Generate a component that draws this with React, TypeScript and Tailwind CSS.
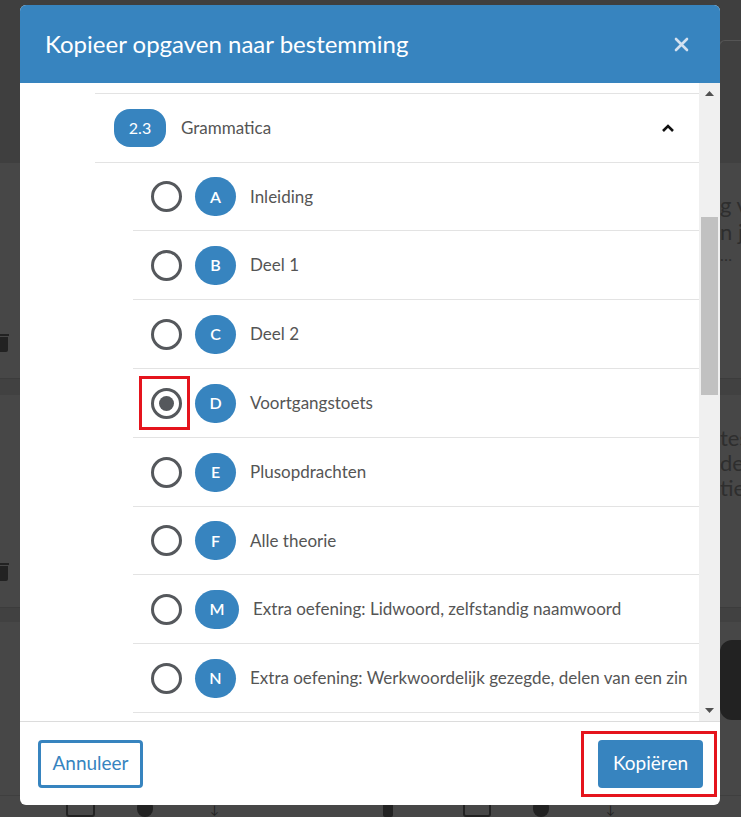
import React from "react";

const items: { l: string; t: string; h: string; sel?: boolean; w?: string }[] = [
  { l: "A", t: "Inleiding", h: "h-[68px]" },
  { l: "B", t: "Deel 1", h: "h-[69px]" },
  { l: "C", t: "Deel 2", h: "h-[69px]" },
  { l: "D", t: "Voortgangstoets", h: "h-[69px]", sel: true },
  { l: "E", t: "Plusopdrachten", h: "h-[69px]" },
  { l: "F", t: "Alle theorie", h: "h-[68px]" },
  { l: "M", t: "Extra oefening: Lidwoord, zelfstandig naamwoord", h: "h-[69px]" },
  { l: "N", t: "Extra oefening: Werkwoordelijk gezegde, delen van een zin", h: "h-[69px]" },
  { l: "O", t: "Extra oefening: Zinsdelen", h: "h-[69px]" },
];

function Background() {
  return (
    <div className="flex flex-col w-full h-full">
      <div className="h-[163px] bg-[#3f3f3f] flex justify-end pt-[40px]">
        <div className="w-[22px] h-[123px] rounded-tl-[6px] border-l border-t border-[#555] bg-[#404040]" />
      </div>
      <div className="h-[215px] bg-[#474747] flex justify-between">
        <div className="flex flex-col justify-end pb-[26px]">
          <div className="w-[9px] h-[2px] bg-[#222]" />
          <div className="w-[8px] h-[15px] mt-[1px] bg-[#222] rounded-br-[2px]" />
        </div>
        <div className="w-[21px] overflow-hidden pt-[28px] text-[#2e2e2e] text-[22px] leading-[27px] whitespace-nowrap" style={{ fontFamily: "Lato, sans-serif" }}>
          <div>g va</div>
          <div>n jij</div>
          <div className="text-[16px] leading-[20px]">…</div>
        </div>
      </div>
      <div className="h-[17px] bg-[#414141] border-t border-[#3c3c3c]" />
      <div className="h-[212px] bg-[#474747] flex justify-between">
        <div className="flex flex-col justify-end pb-[26px]">
          <div className="w-[9px] h-[2px] bg-[#222]" />
          <div className="w-[8px] h-[15px] mt-[1px] bg-[#222] rounded-br-[2px]" />
        </div>
        <div className="w-[21px] overflow-hidden pt-[30px] text-[#2e2e2e] text-[22px] leading-[25px] whitespace-nowrap" style={{ fontFamily: "Lato, sans-serif" }}>
          <div>tes</div>
          <div>den</div>
          <div>tie.</div>
        </div>
      </div>
      <div className="h-[15px] bg-[#414141] border-t border-[#3c3c3c]" />
      <div className="flex-1 bg-[#474747] flex justify-end pt-[18px]">
        <div className="w-[21px] h-[80px] bg-[#222] rounded-tl-[12px] rounded-bl-[12px]" />
      </div>
      <div className="h-[22px] bg-[#474747] border-t border-[#3f3f3f] flex items-end pl-[66px] gap-0">
        <div className="w-[29px] h-[18px] border-2 border-[#222] rounded-[3px]" />
        <div className="w-[16px] h-[18px] ml-[42px] bg-[#222] rounded-full" />
        <div className="w-[12px] h-[14px] ml-[57px] text-[#222] text-[12px] leading-[14px]">↓</div>
        <div className="w-[10px] h-[18px] ml-[161px] bg-[#222] rounded-[2px]" />
        <div className="w-[28px] h-[18px] ml-[70px] border-2 border-[#222] rounded-[3px]" />
        <div className="w-[16px] h-[18px] ml-[42px] bg-[#222] rounded-full" />
        <div className="w-[12px] h-[14px] ml-[57px] text-[#222] text-[12px] leading-[14px]">↓</div>
      </div>
    </div>
  );
}

function Radio({ sel }: { sel?: boolean }) {
  return (
    <div className="relative w-[31px] h-[31px] shrink-0">
      <div className="w-[31px] h-[31px] rounded-full border-[3px] border-[#55585c] flex items-center justify-center bg-white">
        {sel && <div className="w-[15px] h-[15px] rounded-full bg-[#55585c]" />}
      </div>
      {sel && (
        <div className="absolute left-[-12px] top-[-12px] w-[51px] h-[54px] border-[3px] border-[#e5141d]" />
      )}
    </div>
  );
}

export default function App() {
  const font = { fontFamily: "Lato, 'Open Sans', sans-serif" };
  return (
    <div className="relative w-[741px] h-[817px] overflow-hidden bg-[#474747]" style={font}>
      <Background />
      <div className="absolute left-[20px] top-[5px] w-[700px] h-[800px] bg-white rounded-[6px] overflow-hidden flex flex-col">
        {/* header */}
        <div className="h-[78px] shrink-0 bg-[#3784bf] flex items-center justify-between pl-[25px] pr-[31px]">
          <div className="text-white text-[24px] leading-none pb-[1px]">Kopieer opgaven naar bestemming</div>
          <svg width="15" height="15" viewBox="0 0 15 15" className="mt-[1px]">
            <path d="M2 2 L13 13 M13 2 L2 13" stroke="#d3e1f0" strokeWidth="2.6" strokeLinecap="round" />
          </svg>
        </div>
        {/* body */}
        <div className="h-[638px] shrink-0 flex">
          <div className="flex-1 overflow-hidden pt-[10px] pl-[75px]">
            <div className="border-t border-b border-[#e3e3e3] h-[70px] flex items-center pl-[19px] pr-[24px]">
              <div className="w-[52px] h-[38px] rounded-[16px] bg-[#3784bf] text-white text-[16px] flex items-center justify-center">2.3</div>
              <div className="ml-[15px] text-[#555] text-[17px] flex-1">Grammatica</div>
              <svg width="14" height="10" viewBox="0 0 14 10">
                <path d="M2 8 L7 3 L12 8" stroke="#111" strokeWidth="2.6" fill="none" strokeLinejoin="miter" />
              </svg>
            </div>
            <div className="pl-[38px]">
              {items.map((it) => (
                <div key={it.l} className={`${it.h} border-b border-[#e3e3e3] flex items-center pl-[18px]`}>
                  <Radio sel={it.sel} />
                  <div className={`ml-[13px] ${it.l === "M" ? "min-w-[44px]" : "min-w-[41px]"} h-[39px] px-[10px] rounded-full bg-[#3784bf] text-white text-[16px] font-semibold flex items-center justify-center`}>
                    {it.l}
                  </div>
                  <div className="ml-[14px] text-[#555] text-[17px] whitespace-nowrap">{it.t}</div>
                </div>
              ))}
            </div>
          </div>
          {/* scrollbar */}
          <div className="w-[21px] shrink-0 bg-[#f0f0f0] flex flex-col items-center pt-[8px] pb-[8px] pr-[1px]">
            <svg width="9" height="5" viewBox="0 0 9 5"><path d="M0 5 L4.5 0 L9 5 Z" fill="#505050" /></svg>
            <div className="w-[17px] h-[178px] bg-[#c1c1c1] mt-[121px]" />
            <div className="flex-1" />
            <svg width="9" height="5" viewBox="0 0 9 5"><path d="M0 0 L4.5 5 L9 0 Z" fill="#505050" /></svg>
          </div>
        </div>
        {/* footer */}
        <div className="flex-1 border-t border-[#dcdcdc] flex items-center justify-between pl-[18px] pr-[17px]">
          <button className="w-[105px] h-[48px] border-[3px] border-[#3784bf] rounded-[4px] text-[#3784bf] text-[19px] bg-white">
            Annuleer
          </button>
          <div className="relative">
            <button className="w-[105px] h-[48px] rounded-[4px] bg-[#3784bf] text-white text-[19px]">Kopiëren</button>
            <div className="absolute left-[-17px] top-[-9px] w-[136px] h-[66px] border-[3px] border-[#e5141d]" />
          </div>
        </div>
      </div>
    </div>
  );
}
